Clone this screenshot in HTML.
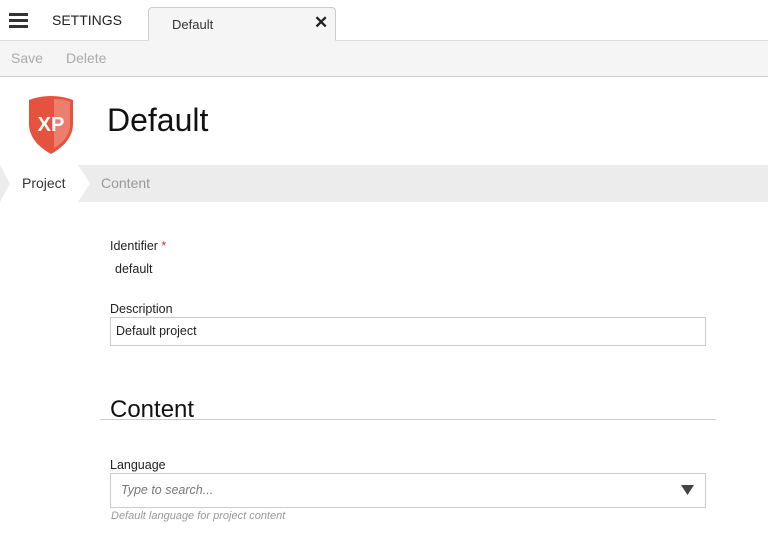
<!DOCTYPE html>
<html><head><style>
*{box-sizing:border-box;margin:0;padding:0}
body{width:768px;height:543px;background:#fff;font-family:"Liberation Sans",sans-serif;color:#222;position:relative;overflow:hidden}
.a{position:absolute;white-space:nowrap}
</style></head><body>
<div class="a" style="left:9px;top:13px;width:19px;height:3px;background:#333;box-shadow:0 6px 0 #333,0 12px 0 #333"></div>
<div class="a" style="left:52px;top:12px;font-size:14px;color:#222">SETTINGS</div>
<div class="a" style="left:148px;top:7px;width:188px;height:35px;background:#f5f5f5;border:1px solid #ccc;border-bottom:none;border-radius:4px 4px 0 0"></div>
<div class="a" style="left:172px;top:17px;font-size:13px;color:#333">Default</div>
<div class="a" style="left:314px;top:13px;font-size:17px;font-weight:bold;color:#222">✕</div>
<div class="a" style="left:0;top:40px;width:768px;height:37px;background:#f5f5f5;border-top:1px solid #ddd;border-bottom:1px solid #ccc"></div>
<div class="a" style="left:149px;top:40px;width:186px;height:2px;background:#f5f5f5"></div>
<div class="a" style="left:11px;top:50px;font-size:14px;color:#aaa">Save</div>
<div class="a" style="left:66px;top:50px;font-size:14px;color:#aaa">Delete</div>
<svg class="a" style="left:28px;top:96px" width="46" height="58" viewBox="0 0 46 58"><path d="M23 0 C32 0 40 2 45 4 L45 28 C45 42 34 52 23 58 C12 52 1 42 1 28 L1 4 C6 2 14 0 23 0Z" fill="#e5533f"/><path d="M26 3 C33 3 39 4 42 6 L42 28 C42 39 35 47 26 52Z" fill="#ee8a7a" opacity=".8"/><text x="23" y="35" text-anchor="middle" font-family="Liberation Sans" font-weight="bold" font-size="20" fill="#fff">XP</text></svg>
<div class="a" style="left:107px;top:102px;font-size:32px;color:#111">Default</div>
<div class="a" style="left:0;top:165px;width:768px;height:37px;background:#ececec"></div>
<svg class="a" style="left:0;top:165px" width="92" height="37"><polygon points="0,0 78,0 90,18.5 78,37 0,37 10,18.5" fill="#fff"/></svg>
<div class="a" style="left:22px;top:175px;font-size:14px;color:#333">Project</div>
<div class="a" style="left:101px;top:175px;font-size:14px;color:#999">Content</div>
<div class="a" style="left:110px;top:239px;font-size:12.5px;color:#222">Identifier <span style="color:#c33">*</span></div>
<div class="a" style="left:115px;top:262px;font-size:12.5px;color:#222">default</div>
<div class="a" style="left:110px;top:302px;font-size:12.5px;color:#222">Description</div>
<div class="a" style="left:110px;top:317px;width:596px;height:29px;border:1px solid #ccc"></div>
<div class="a" style="left:116px;top:324px;font-size:12.5px;color:#222">Default project</div>
<div class="a" style="left:110px;top:396px;font-size:24px;color:#111">Content</div>
<div class="a" style="left:100px;top:419px;width:616px;height:1px;background:#ccc"></div>
<div class="a" style="left:110px;top:458px;font-size:12.5px;color:#222">Language</div>
<div class="a" style="left:110px;top:473px;width:596px;height:35px;border:1px solid #ccc"></div>
<div class="a" style="left:121px;top:483px;font-size:12.5px;font-style:italic;color:#777">Type to search...</div>
<svg class="a" style="left:681px;top:485px" width="13" height="11"><polygon points="0,0 13,0 6.5,10" fill="#444"/></svg>
<div class="a" style="left:111px;top:510px;font-size:11px;font-style:italic;color:#999">Default language for project content</div>
</body></html>
